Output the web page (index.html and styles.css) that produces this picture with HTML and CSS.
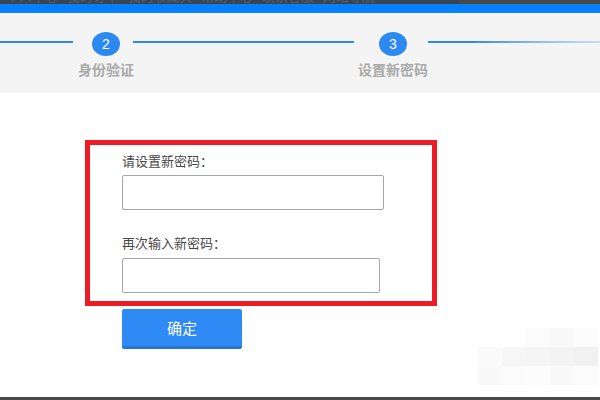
FILE: index.html
```html
<!DOCTYPE html>
<html lang="zh-CN">
<head>
<meta charset="utf-8">
<title>设置新密码</title>
<link rel="stylesheet" href="styles.css">
</head>
<body>
<div class="page">
  <div class="topstrip">
    <div class="topstrip-left"><span class="topstrip-text">个人中心 &nbsp; 我的订单 &nbsp; 我的收藏夹 &nbsp; 帮助中心 &nbsp; 联系客服 &nbsp; 网站导航</span></div>
    <div class="topstrip-right"></div>
  </div>
  <div class="bluebar"></div>
  <div class="steps">
    <div class="line line1"></div>
    <div class="step">
      <div class="circle">2</div>
      <div class="step-label">身份验证</div>
    </div>
    <div class="line line2"></div>
    <div class="step">
      <div class="circle">3</div>
      <div class="step-label">设置新密码</div>
    </div>
    <div class="line line3"></div>
  </div>
  <div class="main">
    <div class="form-box">
      <label class="field-label">请设置新密码：</label>
      <input class="field field-a" type="password">
      <label class="field-label second">再次输入新密码：</label>
      <input class="field field-b" type="password">
    </div>
    <button class="confirm">确定</button>
    <div class="watermark">
      <div class="wm-row"><span class="wm w1"></span><span class="wm w2"></span><span class="wm w3"></span></div>
      <div class="wm-row"><span class="wm w4"></span><span class="wm w5"></span><span class="wm w6"></span><span class="wm w7"></span><span class="wm w8"></span></div>
      <div class="wm-row"><span class="wm w2"></span><span class="wm w1"></span><span class="wm w3"></span><span class="wm w2"></span><span class="wm w1"></span></div>
    </div>
  </div>
  <div class="bottomstrip"></div>
</div>
</body>
</html>
```
FILE: styles.css
```css
* { box-sizing: border-box; }
html, body { margin: 0; padding: 0; }
body {
  width: 600px;
  height: 400px;
  overflow: hidden;
  background: #ffffff;
  font-family: "Noto Sans CJK SC", "Noto Sans", sans-serif;
}
.page {
  display: flex;
  flex-direction: column;
  height: 400px;
}
.topstrip {
  display: flex;
  height: 4px;
  overflow: hidden;
}
.topstrip-left {
  width: 459px;
  background: #3a4450;
  overflow: hidden;
}
.topstrip-text {
  display: block;
  margin-top: -11px;
  padding-left: 6px;
  font-size: 13px;
  line-height: 14px;
  color: #55606b;
  white-space: nowrap;
}
.topstrip-right {
  flex: 1;
  background: #484848;
}
.bluebar {
  height: 9px;
  background: #0780fd;
}
.steps {
  display: flex;
  align-items: flex-start;
  height: 80px;
  padding-top: 19px;
  background: #f4f4f4;
}
.line {
  height: 2px;
  margin-top: 9px;
  background: #2d89f2;
}
.line1 { width: 73px; margin-right: 19px; }
.line2 { width: 221px; margin-left: 13px; margin-right: 25px; }
.line3 {
  flex: 1;
  margin-left: 21px;
  background: linear-gradient(to right, #2d89f2 0%, #2d89f2 25%, #8fbcf0 65%, #c9dcf2 100%);
}
.step {
  width: 28px;
  display: flex;
  flex-direction: column;
  align-items: center;
}
.circle {
  width: 28px;
  height: 24px;
  border-radius: 50%;
  background: #2d89f2;
  color: #ffffff;
  font-family: "Liberation Sans", "Noto Sans", sans-serif;
  font-size: 14px;
  line-height: 24px;
  text-align: center;
}
.step-label {
  margin-top: 5px;
  white-space: nowrap;
  font-size: 14px;
  line-height: 16px;
  font-weight: bold;
  color: #a9a9a9;
}
.main {
  position: relative;
  flex: 1;
  display: flex;
  flex-direction: column;
  align-items: flex-start;
  padding: 47px 0 0 85px;
}
.form-box {
  width: 352px;
  height: 166px;
  border: 5px solid #ec1b24;
  padding: 7px 0 0 32px;
  display: flex;
  flex-direction: column;
  align-items: flex-start;
}
.field-label {
  font-size: 13px;
  line-height: 18px;
  color: #474747;
}
.field-label.second { margin-top: 24px; }
.field {
  height: 35px;
  margin-top: 5px;
  border: 1px solid #a3a7ab;
  border-radius: 2px;
  background: #ffffff;
  padding: 0 6px;
}
.field-a { width: 262px; }
.field-b { width: 258px; margin-top: 6px; }
.confirm {
  margin: 3px 0 0 37px;
  width: 120px;
  height: 40px;
  border: 0;
  border-bottom: 3px solid #2777d6;
  border-radius: 2px;
  background: #2e8af5;
  color: #ffffff;
  font-family: "Noto Sans CJK SC", sans-serif;
  font-size: 15px;
  line-height: 37px;
  padding: 0;
}
.watermark {
  position: absolute;
  left: 478px;
  top: 235px;
  display: flex;
  flex-direction: column;
  align-items: flex-end;
}
.wm-row { display: flex; }
.wm { display: block; width: 24px; height: 19px; }
.w1 { background: #fbfbfb; }
.w2 { background: #f9f9f9; }
.w3 { background: #fcfcfc; }
.w4 { background: #fafafa; }
.w5 { background: #f6f6f6; }
.w6 { background: #f5f5f5; }
.w7 { background: #f3f3f3; }
.w8 { background: #f1f1f1; }
.bottomstrip {
  height: 3px;
  background: #474747;
}
```
